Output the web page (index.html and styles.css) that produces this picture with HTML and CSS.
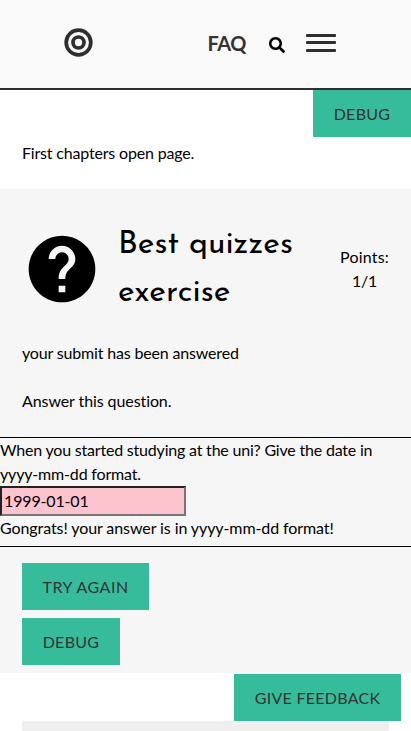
FILE: index.html
```html
<!DOCTYPE html>
<html lang="en">
<head>
<meta charset="utf-8">
<title>Best quizzes exercise</title>
<link rel="stylesheet" href="styles.css">
</head>
<body>
<header class="topbar">
  <a class="logo"><svg width="31" height="31" viewBox="0 0 31 31" fill="none" stroke="#2e2e2e"><circle cx="15.5" cy="15.5" r="12.3" stroke-width="3.7"/><circle cx="15.5" cy="15.5" r="5.500" stroke-width="3.7"/></svg></a>
  <nav class="nav">
    <a class="faq">FAQ</a>
    <svg class="search" width="16" height="16" viewBox="0 0 512 512"><path d="M505 442.7 405.3 343c-4.5-4.500-10.600-7-17-7H372c27.600-35.300 44-79.700 44-128C416 93.100 322.900 0 208 0S0 93.100 0 208s93.100 208 208 208c48.300 0 92.700-16.400 128-44v16.300c0 6.400 2.500 12.500 7 17l99.700 99.700c9.400 9.400 24.600 9.400 33.900 0l28.300-28.300c9.400-9.400 9.400-24.600.1-34zM208 336c-70.700 0-128-57.200-128-128 0-70.700 57.200-128 128-128 70.700 0 128 57.200 128 128 0 70.700-57.200 128-128 128z"/></svg>
    <div class="burger"><span></span><span></span><span></span></div>
  </nav>
</header>
<main>
  <div class="tools"><button class="btn debug">DEBUG</button></div>
  <p class="intro">First chapters open page.</p>
  <section class="exercise">
    <div class="heading">
      <svg class="help" width="80" height="80" viewBox="0 0 24 24"><path d="M12 2C6.480 2 2 6.480 2 12s4.480 10 10 10 10-4.480 10-10S17.520 2 12 2zm1 17h-2v-2h2v2zm2.070-7.750-.9.920C13.450 12.900 13 13.500 13 15h-2v-.5c0-1.100.45-2.100 1.170-2.830l1.240-1.260c.37-.36.59-.86.59-1.410 0-1.100-.9-2-2-2s-2 .9-2 2H8c0-2.210 1.790-4 4-4s4 1.790 4 4c0 .88-.36 1.680-.93 2.250z"/></svg>
      <h1>Best quizzes<br><span class="second">exercise</span></h1>
      <div class="points"><span class="label">Points:</span><br><span class="score">1/1</span></div>
    </div>
    <p class="note">your submit has been answered</p>
    <p class="note prompt">Answer this question.</p>
    <form class="question">
      <div class="ask">When you started studying at the uni? Give the date in <span class="format">yyyy-mm-dd format.</span></div>
      <input type="text" value="1999-01-01">
      <div class="result">Gongrats! your answer is in yyyy-mm-dd format!</div>
    </form>
    <div class="actions"><button class="btn">TRY AGAIN</button><button class="btn debug">DEBUG</button></div>
  </section>
  <div class="feedback"><button class="btn send">GIVE FEEDBACK</button></div>
  <div class="panel"></div>
</main>
</body>
</html>
```
FILE: styles.css
```css
* { box-sizing: border-box; }
html, body { height: 731px; overflow: hidden; }
body { margin: 0; background: #fff; color: #000; font: 16px/24px Lato, sans-serif; font-variant-ligatures: none; }
p, h1 { margin: 0; }
.topbar { height: 90px; background: #f9f9f9; border-bottom: 2px solid #2e2e2e; display: flex; justify-content: space-between; padding: 0 75px 0 63px; }
.logo { padding-top: 27px; }
.logo svg { display: block; }
.nav { display: flex; align-items: flex-start; }
.faq { margin-top: 31px; margin-right: 23px; font-size: 20px; font-weight: 700; letter-spacing: -.4px; color: #333; }
.search { margin-top: 37px; margin-right: 21px; }
.burger { width: 30px; height: 18px; margin-top: 34px; display: flex; flex-direction: column; }
.burger span { height: 3px; border-radius: 1px; background: #2e2e2e; }
.burger span + span { margin-top: 4px; }
.burger span:last-child { margin-top: 5px; }
.tools { display: flex; justify-content: flex-end; }
.btn { display: block; height: 47px; border: 0; padding: 0 20.500px; background: #37bc9b; color: #333; font: 16px/24px Lato, sans-serif; letter-spacing: .5px; white-space: nowrap; }
.btn.debug { width: 98px; letter-spacing: .3px; }
.btn.send { width: 167px; padding: 0 20px; letter-spacing: .27px; }
.intro { padding: 4px 22px 24px; letter-spacing: -.18px; }
.exercise { height: 484px; background: #f6f6f6; }
.heading { display: flex; align-items: center; padding: 32px 22px 0; height: 128px; }
.help { flex: none; }
.heading h1 { flex: 1; margin-left: 16px; font: 400 32px/48px "Josefin Sans", Lato, sans-serif; white-space: nowrap; }
.second { letter-spacing: .15px; }
.points { text-align: center; }
.label { letter-spacing: .2px; }
.score { letter-spacing: -.3px; }
.note { padding: 24px 22px 0; letter-spacing: -.17px; }
.note.prompt { padding-bottom: 24px; letter-spacing: -.09px; }
.question { border: solid #000; border-width: 1px 0; height: 110px; }
.ask { letter-spacing: -.2px; }
.format { letter-spacing: -.17px; }
.result { letter-spacing: -.09px; }
.question input { display: block; width: 186px; height: 30px; padding: 0 2px 2px; border: 2px inset #767676; background: #fdc4cf; font: 16px/24px Lato, sans-serif; letter-spacing: -.15px; color: #000; }
.actions { display: flex; flex-direction: column; align-items: flex-start; gap: 8px; padding: 16px 22px 0; }
.feedback { display: flex; justify-content: flex-end; padding: 1px 10px 0; }
.panel { height: 10px; margin: 0 22px; background: #efefef; }
```
